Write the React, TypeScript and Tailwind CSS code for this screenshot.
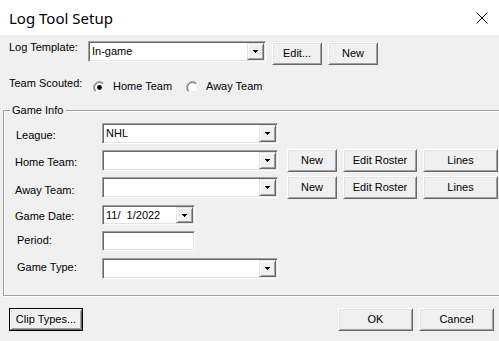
import React from "react";

function Arrow() {
  return (
    <svg width="5" height="3" viewBox="0 0 5 3" shapeRendering="crispEdges">
      <rect x="0" y="0" width="5" height="1" fill="#000" />
      <rect x="1" y="1" width="3" height="1" fill="#000" />
      <rect x="2" y="2" width="1" height="1" fill="#000" />
    </svg>
  );
}

function DropBtn() {
  return (
    <div className="w-[17px] my-[1px] mr-[1px] shrink-0 flex items-center justify-center bg-[#f0f0f0] border border-t-[#e3e3e3] border-l-[#e3e3e3] border-b-[#696969] border-r-[#696969] shadow-[inset_1px_1px_0_#fff,inset_-1px_-1px_0_#a0a0a0]">
      <Arrow />
    </div>
  );
}

function Combo({ className, value }: { className: string; value?: string }) {
  return (
    <div
      className={
        "flex shrink-0 bg-white border border-t-[#a0a0a0] border-l-[#a0a0a0] border-b-white border-r-white shadow-[inset_1px_1px_0_#696969,inset_-1px_-1px_0_#e3e3e3] " +
        className
      }
    >
      <div className="flex-1 flex items-center pl-[3px] whitespace-pre">{value}</div>
      <DropBtn />
    </div>
  );
}

function Btn({ className, children }: { className: string; children: React.ReactNode }) {
  return (
    <div
      className={
        "flex shrink-0 items-center justify-center bg-[#f0f0f0] border border-t-white border-l-white border-b-[#696969] border-r-[#696969] shadow-[inset_1px_1px_0_#e3e3e3,inset_-1px_-1px_0_#a0a0a0] " +
        className
      }
    >
      {children}
    </div>
  );
}

function Radio({ checked }: { checked?: boolean }) {
  return (
    <svg width="13" height="13" viewBox="0 0 13 13" className="shrink-0">
      <circle cx="6.5" cy="6.5" r="5" fill="#fff" />
      <path d="M2.257 10.743 A6 6 0 0 1 10.743 2.257" stroke="#a0a0a0" strokeWidth="1" fill="none" />
      <path d="M10.743 2.257 A6 6 0 0 1 2.257 10.743" stroke="#ffffff" strokeWidth="1" fill="none" />
      <path d="M2.964 10.036 A5 5 0 0 1 10.036 2.964" stroke="#696969" strokeWidth="1" fill="none" />
      <path d="M10.036 2.964 A5 5 0 0 1 2.964 10.036" stroke="#e3e3e3" strokeWidth="1" fill="none" />
      {checked && <circle cx="6.5" cy="6.5" r="2.4" fill="#000" />}
    </svg>
  );
}

export default function App() {
  return (
    <div className="w-[499px] h-[341px] overflow-hidden bg-[#f0f0f0] flex flex-col font-['Liberation_Sans',Arial,sans-serif] text-[11px] leading-[13px] text-black">
      <div className="h-[35px] bg-white flex items-center justify-between pl-[9px] pr-[11px] shrink-0">
        <span className="font-['Noto_Sans',sans-serif] text-[15px] leading-[20px]">Log Tool Setup</span>
        <svg width="12" height="12" viewBox="0 0 12 12">
          <path d="M0.5 0.5 L11.5 11.5 M11.5 0.5 L0.5 11.5" stroke="#000" strokeWidth="1" />
        </svg>
      </div>

      <div className="flex items-start mt-[6px] h-[24px] shrink-0">
        <div className="ml-[9px] w-[79px] shrink-0">Log Template:</div>
        <Combo className="w-[178px] h-[21px]" value="In-game" />
        <Btn className="ml-[6px] mt-[1px] w-[50px] h-[23px]">Edit...</Btn>
        <Btn className="ml-[6px] mt-[1px] w-[50px] h-[23px]">New</Btn>
      </div>

      <div className="flex items-start mt-[12px] h-[17px] shrink-0">
        <div className="ml-[9px] w-[84px] shrink-0">Team Scouted:</div>
        <div className="w-[93px] flex items-start shrink-0">
          <div className="mt-[4px]">
            <Radio checked />
          </div>
          <span className="ml-[7px] mt-[3px]">Home Team</span>
        </div>
        <div className="w-[93px] flex items-start shrink-0">
          <div className="mt-[4px]">
            <Radio />
          </div>
          <span className="ml-[7px] mt-[3px]">Away Team</span>
        </div>
      </div>

      <fieldset className="ml-[3px] mr-0 mb-0 mt-[10px] p-0 pb-[16px] min-w-0 w-[520px] shrink-0 border border-[#a0a0a0] shadow-[1px_1px_0_#fff,inset_1px_1px_0_#fff]">
        <legend className="ml-[6px] pl-[2px] pr-[3px] bg-[#f0f0f0] leading-[13px]">Game Info</legend>

        <div className="flex items-start mt-[6px] h-[21px]">
          <div className="w-[98px] pl-[12px] mt-[6px] shrink-0">League:</div>
          <Combo className="w-[176px] h-[21px]" value="NHL" />
        </div>

        <div className="flex items-start mt-[5px] h-[23px]">
          <div className="w-[98px] pl-[11px] mt-[7px] shrink-0">Home Team:</div>
          <Combo className="w-[176px] h-[21px] mt-[1px]" />
          <Btn className="ml-[9px] w-[50px] h-[23px]">New</Btn>
          <Btn className="ml-[6px] w-[74px] h-[23px]">Edit Roster</Btn>
          <Btn className="ml-[6px] w-[75px] h-[23px]">Lines</Btn>
        </div>

        <div className="flex items-start mt-[4px] h-[23px]">
          <div className="w-[98px] pl-[11px] mt-[8px] shrink-0">Away Team:</div>
          <Combo className="w-[176px] h-[21px] mt-[1px]" />
          <Btn className="ml-[9px] w-[50px] h-[23px]">New</Btn>
          <Btn className="ml-[6px] w-[74px] h-[23px]">Edit Roster</Btn>
          <Btn className="ml-[6px] w-[75px] h-[23px]">Lines</Btn>
        </div>

        <div className="flex items-start mt-[6px] h-[20px]">
          <div className="w-[98px] pl-[11px] mt-[5px] shrink-0">Game Date:</div>
          <div className="flex w-[93px] h-[20px] shrink-0 bg-white border border-t-[#a0a0a0] border-l-[#a0a0a0] border-b-white border-r-white shadow-[inset_1px_1px_0_#696969,inset_-1px_-1px_0_#e3e3e3]">
            <div className="flex-1 flex items-center pl-[3px] whitespace-pre">11/  1/2022</div>
            <DropBtn />
          </div>
        </div>

        <div className="flex items-start mt-[6px] h-[20px]">
          <div className="w-[98px] pl-[13px] mt-[3px] shrink-0">Period:</div>
          <div className="w-[93px] h-[20px] shrink-0 bg-white border border-t-[#a0a0a0] border-l-[#a0a0a0] border-b-white border-r-white shadow-[inset_1px_1px_0_#696969,inset_-1px_-1px_0_#e3e3e3]" />
        </div>

        <div className="flex items-start mt-[7px] h-[21px]">
          <div className="w-[98px] pl-[13px] mt-[3px] shrink-0">Game Type:</div>
          <Combo className="w-[176px] h-[21px]" />
        </div>
      </fieldset>

      <div className="flex items-start mt-[12px] shrink-0">
        <div className="ml-[9px] w-[74px] h-[23px] border border-black flex shrink-0">
          <Btn className="w-full h-full">Clip Types...</Btn>
        </div>
        <Btn className="ml-[255px] w-[75px] h-[23px]">OK</Btn>
        <Btn className="ml-[6px] w-[75px] h-[23px]">Cancel</Btn>
      </div>
    </div>
  );
}
